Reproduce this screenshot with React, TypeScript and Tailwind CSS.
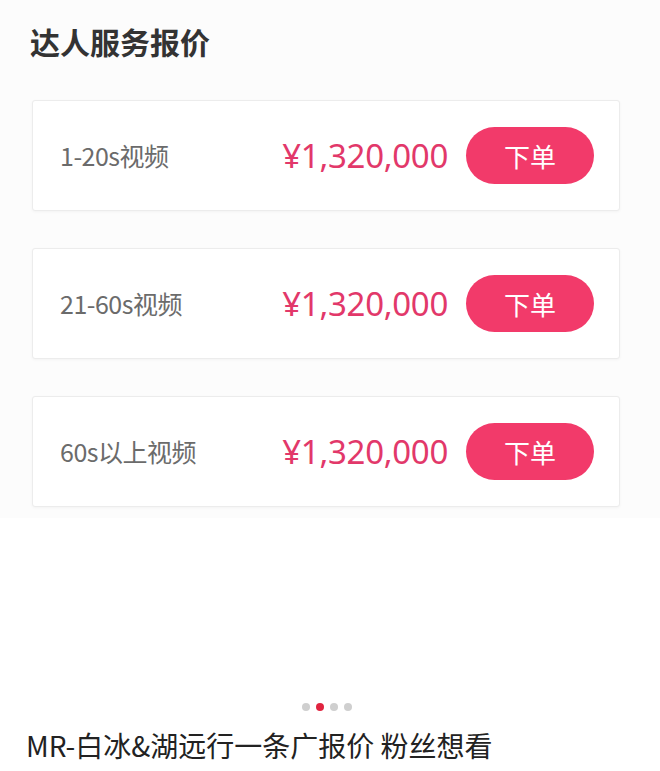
const rows = ["1-20s视频", "21-60s视频", "60s以上视频"];

function PriceRow({ label }: { label: string }) {
  return (
    <div className="flex h-[111px] items-center rounded-[3px] border border-[#ececec] bg-white pl-[27px] pr-[25px] shadow-[0_1px_3px_rgba(0,0,0,0.04)]">
      <div className="flex-1 text-[25px] tracking-[-0.5px] text-[#6b6b6b]">{label}</div>
      <div className="mr-[18px] text-[33px] tracking-[-0.3px] text-[#e2386a] [font-family:'Noto_Sans','Noto_Sans_CJK_SC',sans-serif]">
        ¥1,320,000
      </div>
      <button className="flex h-[57px] w-[128px] items-center justify-center rounded-full bg-[#f23a6a] text-[26px] text-white">
        下单
      </button>
    </div>
  );
}

export default function App() {
  return (
    <div className="h-[771px] w-[660px] bg-white [font-family:'Noto_Sans_CJK_SC',sans-serif]">
      <div className="h-[518px] bg-[#fcfcfc] pl-[32px] pr-[40px] pt-[21px]">
        <div className="-ml-[2px] text-[30px] font-bold leading-[40px] text-[#333]">达人服务报价</div>
        <div className="mt-[39px] flex flex-col gap-[37px]">
          {rows.map((r) => (
            <PriceRow key={r} label={r} />
          ))}
        </div>
      </div>
      <div className="mt-[185px] flex justify-center gap-[6px] pr-[7px]">
        <span className="h-[8px] w-[8px] rounded-full bg-[#cfcfcf]" />
        <span className="h-[8px] w-[8px] rounded-full bg-[#e0243f]" />
        <span className="h-[8px] w-[8px] rounded-full bg-[#cfcfcf]" />
        <span className="h-[8px] w-[8px] rounded-full bg-[#cfcfcf]" />
      </div>
      <div className="mt-[14px] pl-[26px] text-[28px] leading-[40px] text-[#222]">
        MR-白冰&amp;湖远行一条广报价 粉丝想看
      </div>
    </div>
  );
}
